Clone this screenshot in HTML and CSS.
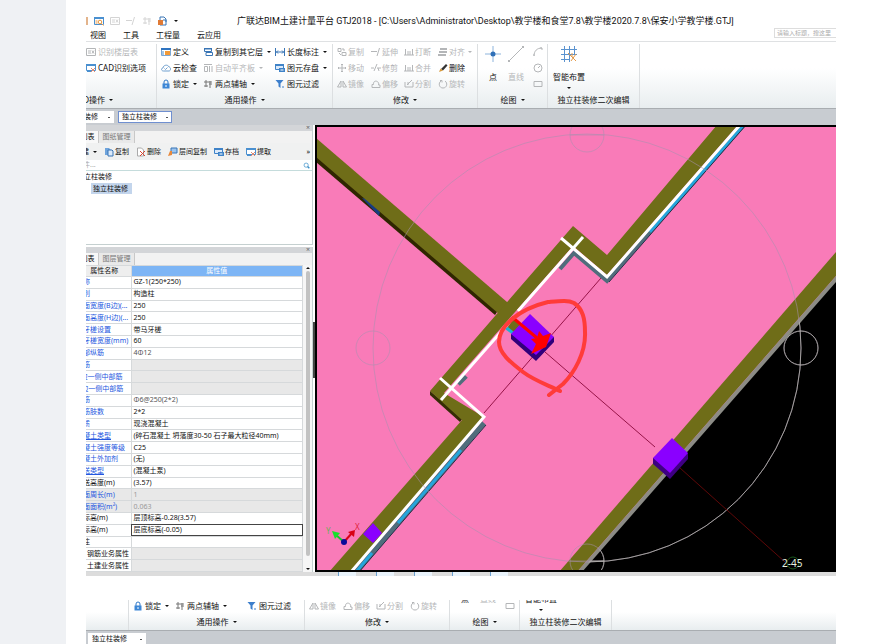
FILE: index.html
```html
<!DOCTYPE html>
<html lang="zh-CN">
<head>
    <meta charset="UTF-8">
    <meta name="viewport" content="width=device-width, initial-scale=1.0">
    <title>广联达BIM土建计量平台 GTJ2018</title>
    <link rel="stylesheet" href="styles.css">
</head>
<body>
    <!-- icon sprite -->
    <svg class="sprite" aria-hidden="true">
        <symbol id="i-find" viewBox="0 0 10 10"><path d="M.5 1.5h9v7h-9z" fill="#fff" stroke="#4a90d0"/><path d="M0 1h10v2H0z" fill="#4a90d0"/><circle cx="6" cy="6" r="1.8" fill="#fff" stroke="#e8943a"/><path d="M7.5 7.5L9.5 9.5M1.5 5h2M1.5 7h2" stroke="#e8943a"/></symbol>
        <symbol id="i-table" viewBox="0 0 10 10"><path d="M.5 1.5h9v7h-9zM2 4h3M2 6h3M6 3.5l2 3M8 3.5l-2 3" fill="none" stroke="currentColor"/></symbol>
        <symbol id="i-cad" viewBox="0 0 10 10"><path d="M.5 1.5h9v6h-9z" fill="#fff" stroke="#4a90d0"/><path d="M0 1h10v2H0zM1 7h4v2H1z" fill="#4a90d0"/><path d="M5 5l4 4M9 5L5 9" stroke="#e08a70"/></symbol>
        <symbol id="i-define" viewBox="0 0 10 10"><path d="M.5 1.5h9v7h-9z" fill="#fff" stroke="#7aa7d6"/><path d="M0 1h10v2H0z" fill="#2f74c0"/><path d="M4 4h5v4H4z" fill="#f29a38"/><path d="M1 5h2M1 7h2" stroke="#4a90d0"/></symbol>
        <symbol id="i-cloud" viewBox="0 0 10 10"><path d="M2.500 8C0 8 0 5 2 5c0-3 5-4 6-1 2 0 2 4 0 4z" fill="none" stroke="currentColor"/><path d="M3.500 5.500l1 1 2-2" fill="none" stroke="currentColor"/></symbol>
        <symbol id="i-lock" viewBox="0 0 10 10"><path d="M3 5V3a2 2 0 0 1 4 0v2" fill="none" stroke="#2f78c8"/><path d="M1.500 4.500h7V9.500h-7z" fill="#3d87d6"/><path d="M5 6v2" stroke="#fff"/></symbol>
        <symbol id="i-copyto" viewBox="0 0 10 10"><path d="M1.500 1.500h7v3h-7zM3 5.500h6.500v3H3z" fill="#fff" stroke="#3975b5"/><path d="M1 1h8v1.500H1z" fill="#3975b5"/></symbol>
        <symbol id="i-slab" viewBox="0 0 10 10"><path d="M1 1.500h8M1.500 3.500h3v5h-3zM6.500 3v6M9 3v6" fill="none" stroke="currentColor"/></symbol>
        <symbol id="i-axis" viewBox="0 0 10 10"><path d="M3 1v7M7 2v7M1 3h8M1 7h4M6 5h3" fill="none" stroke="currentColor"/></symbol>
        <symbol id="i-dim" viewBox="0 0 10 10"><path d="M.5 1v8M9.500 1v8M1 5h8M3 3.500L1.500 5 3 6.500M7 3.500L8.500 5 7 6.500" fill="none" stroke="#3975b5"/></symbol>
        <symbol id="i-save" viewBox="0 0 10 10"><path d="M.5 1.500h8v5h-8z" fill="#dceafa" stroke="#3f83c8"/><path d="M0 1h9v2H0zM4 5h6v4H4z" fill="#3f83c8"/><path d="M5.500 7h3" stroke="#fff"/></symbol>
        <symbol id="i-filter" viewBox="0 0 10 10"><path d="M.5 1h8L5.500 4.500V9l-2-1.500v-3z" fill="#3d7fcc"/><path d="M7 8h2" stroke="#3d7fcc"/></symbol>
        <symbol id="i-copy" viewBox="0 0 10 10"><path d="M1 1.500h3v3H1zM5 5.500h4v3H5zM5 2h2v2M2 6l2 2" fill="none" stroke="currentColor"/></symbol>
        <symbol id="i-extend" viewBox="0 0 10 10"><path d="M0 4.500h6M8.500 1L6 9" fill="none" stroke="currentColor"/></symbol>
        <symbol id="i-break" viewBox="0 0 10 10"><path d="M1.500 2v6M4 4v4M6 4v4M8.500 2v6M0 8h10" fill="none" stroke="currentColor"/></symbol>
        <symbol id="i-align" viewBox="0 0 10 10"><path d="M2 1h7v2H2zM1 4h8v2H1zM0 7h8v2H0z" fill="currentColor"/></symbol>
        <symbol id="i-move" viewBox="0 0 10 10"><path d="M5 1v8M1 5h8M4 2l1-1 1 1M4 8l1 1 1-1M2 4L1 5l1 1M8 4l1 1-1 1" fill="none" stroke="currentColor"/></symbol>
        <symbol id="i-trim" viewBox="0 0 10 10"><path d="M0 5h3M6 5h4M6 1L3 8M7 5l1 3" fill="none" stroke="currentColor"/></symbol>
        <symbol id="i-pen" viewBox="0 0 10 10"><path d="M3 6l5-5 1.500 1.500L5 7.500z" fill="#333"/><path d="M1 9l1.500-3.500L5 7.500z" fill="#d79a3c"/></symbol>
        <symbol id="i-mirror" viewBox="0 0 10 10"><path d="M4 2v6H.5zM6 2v6h3.500z" fill="none" stroke="currentColor"/></symbol>
        <symbol id="i-offset" viewBox="0 0 10 10"><path d="M1 8.500h8V6H7.500C9 2 2 0 2.500 5.500H1z" fill="none" stroke="currentColor"/></symbol>
        <symbol id="i-split" viewBox="0 0 10 10"><path d="M1 3v5h8V3M3 6L8 1M4 3v3" fill="none" stroke="currentColor"/></symbol>
        <symbol id="i-rotate" viewBox="0 0 10 10"><path d="M3 2C0 4 1 9 5 9s5-5 2-7M2 1.500h2v2" fill="none" stroke="currentColor"/></symbol>
        <symbol id="i-point" viewBox="0 0 18 18"><path d="M9 1v16M1 9h16" stroke="#8db4dc"/><circle cx="9" cy="9" r="2.500" fill="#2f70b8"/></symbol>
        <symbol id="i-line" viewBox="0 0 18 18"><path d="M2 16L16 2" stroke="currentColor"/><path d="M1 15h2v2H1zM15 1h2v2h-2z" fill="currentColor"/></symbol>
        <symbol id="i-arc" viewBox="0 0 10 10"><path d="M1 9C1 4 4 1 9 1M1 7v2M7 1h2v2" fill="none" stroke="currentColor"/></symbol>
        <symbol id="i-circle" viewBox="0 0 10 10"><circle cx="5" cy="5" r="4" fill="none" stroke="currentColor"/><path d="M5 5l2-2" stroke="currentColor"/></symbol>
        <symbol id="i-rect" viewBox="0 0 10 10"><path d="M1 2.500h8v5H1z" fill="none" stroke="currentColor"/></symbol>
        <symbol id="i-smart" viewBox="0 0 18 18"><path d="M1 4.500h16M1 9.500h16M1 14.500h9M4.500 1v16M9.500 1v16M14.500 1v9" stroke="#5b93cf"/><path d="M8 8l8 8M16 9l-5 7M12 8v4" stroke="#e39a4a"/></symbol>
        <symbol id="i-doc" viewBox="0 0 10 10"><path d="M1 1h4l2 2v5H1z" fill="#6fa4dc"/><path d="M4 3h4l1 1v5H4z" fill="#dceafa" stroke="#3975b5"/></symbol>
        <symbol id="i-del" viewBox="0 0 10 10"><path d="M1.500 1h4l2 2v6h-6z" fill="#fff" stroke="#aaa"/><path d="M4 4l5 5M9 4L4 9" stroke="#d8432e"/></symbol>
        <symbol id="i-layer" viewBox="0 0 10 10"><path d="M3 1h6v5H3z" fill="#9cc4ee" stroke="#3975b5"/><path d="M0 9l2-5h2v4z" fill="#e8883a"/></symbol>
        <symbol id="i-search" viewBox="0 0 10 10"><circle cx="4.500" cy="4.500" r="3" fill="none" stroke="#3a8fc8"/><path d="M6.500 6.500L9 9" stroke="#3a8fc8" stroke-width="2"/></symbol>
        <symbol id="i-export" viewBox="0 0 10 10"><path d="M2 1h4l2 2v6H2z" fill="#fff" stroke="#3975b5"/><path d="M0 4h5v5H0z" fill="#e07a35"/><path d="M5 4h3v2" stroke="#3975b5" fill="none"/></symbol>
    </svg>

    <main class="paper">
        <section class="shot">
            <header class="titlebar">
                <div class="quick">
                    <i class="edge"></i>
                    <svg class="ic"><use href="#i-find"/></svg>
                    <svg class="ic off"><use href="#i-table"/></svg>
                    <svg class="ic off"><use href="#i-extend"/></svg>
                    <svg class="ic off"><use href="#i-axis"/></svg>
                    <svg class="ic"><use href="#i-export"/></svg>
                    <i class="caret"></i>
                </div>
                <h1>广联达BIM土建计量平台 GTJ2018 - [C:\Users\Administrator\Desktop\教学楼和食堂7.8\教学楼2020.7.8\保安小学教学楼.GTJ]</h1>
            </header>
            <nav class="menu">
                <a href="#">视图</a>
                <a href="#">工具</a>
                <a href="#">工程量</a>
                <a href="#">云应用</a>
                <input type="text" placeholder="请输入标题，搜这里" aria-label="搜索">
            </nav>

            <div class="ribbon">
                <div class="group g-cad">
                    <div class="cells">
                        <button class="off"><svg class="ic"><use href="#i-table"/></svg>识别楼层表</button>
                        <button><svg class="ic"><use href="#i-cad"/></svg>CAD识别选项</button>
                    </div>
                    <button class="name">CAD操作<i class="caret"></i></button>
                </div>
                <div class="group g-common">
                    <div class="cells">
                        <button><svg class="ic"><use href="#i-define"/></svg>定义</button>
                        <button><svg class="ic"><use href="#i-copyto"/></svg>复制到其它层<i class="caret"></i></button>
                        <button><svg class="ic"><use href="#i-dim"/></svg>长度标注<i class="caret"></i></button>
                        <button><svg class="ic blue"><use href="#i-cloud"/></svg>云检查</button>
                        <button class="off"><svg class="ic"><use href="#i-slab"/></svg>自动平齐板<i class="caret"></i></button>
                        <button><svg class="ic"><use href="#i-save"/></svg>图元存盘<i class="caret"></i></button>
                        <button><svg class="ic"><use href="#i-lock"/></svg>锁定<i class="caret"></i></button>
                        <button><svg class="ic gray"><use href="#i-axis"/></svg>两点辅轴<i class="caret"></i></button>
                        <button><svg class="ic"><use href="#i-filter"/></svg>图元过滤</button>
                    </div>
                    <button class="name">通用操作<i class="caret"></i></button>
                </div>
                <div class="group g-edit">
                    <div class="cells">
                        <button class="off"><svg class="ic"><use href="#i-copy"/></svg>复制</button>
                        <button class="off"><svg class="ic"><use href="#i-extend"/></svg>延伸</button>
                        <button class="off"><svg class="ic"><use href="#i-break"/></svg>打断</button>
                        <button class="off"><svg class="ic"><use href="#i-align"/></svg>对齐<i class="caret"></i></button>
                        <button class="off"><svg class="ic"><use href="#i-move"/></svg>移动</button>
                        <button class="off"><svg class="ic"><use href="#i-trim"/></svg>修剪</button>
                        <button class="off"><svg class="ic"><use href="#i-break"/></svg>合并</button>
                        <button><svg class="ic"><use href="#i-pen"/></svg>删除</button>
                        <button class="off"><svg class="ic"><use href="#i-mirror"/></svg>镜像</button>
                        <button class="off"><svg class="ic"><use href="#i-offset"/></svg>偏移</button>
                        <button class="off"><svg class="ic"><use href="#i-split"/></svg>分割</button>
                        <button class="off"><svg class="ic"><use href="#i-rotate"/></svg>旋转</button>
                    </div>
                    <button class="name">修改<i class="caret"></i></button>
                </div>
                <div class="group g-draw">
                    <div class="cells">
                        <button class="big"><svg><use href="#i-point"/></svg>点</button>
                        <button class="big off"><svg><use href="#i-line"/></svg>直线</button>
                        <div class="shapes off">
                            <svg class="ic"><use href="#i-arc"/></svg>
                            <svg class="ic"><use href="#i-circle"/></svg>
                            <svg class="ic"><use href="#i-rect"/></svg>
                        </div>
                    </div>
                    <button class="name">绘图<i class="caret"></i></button>
                </div>
                <div class="group g-second">
                    <div class="cells">
                        <button class="big"><svg><use href="#i-smart"/></svg>智能布置<i class="caret"></i></button>
                    </div>
                    <div class="name">独立柱装修二次编辑</div>
                </div>
            </div>

            <div class="picker">
                <select class="cut" aria-label="构件类别"><option>装修</option></select>
                <select class="active" aria-label="构件类型"><option>独立柱装修</option></select>
            </div>

            <div class="work">
                <aside class="side">
                    <div class="panel list">
                        <div class="grip">×</div>
                        <div class="tabs"><button class="on">构件列表</button><button>图纸管理</button></div>
                        <div class="tools">
                            <button class="new">新建<i class="caret"></i></button>
                            <button><svg class="ic"><use href="#i-doc"/></svg>复制</button>
                            <button><svg class="ic"><use href="#i-del"/></svg>删除</button>
                            <button><svg class="ic"><use href="#i-layer"/></svg>层间复制</button>
                            <button><svg class="ic"><use href="#i-save"/></svg>存档</button>
                            <button><svg class="ic"><use href="#i-cad"/></svg>提取</button>
                            <span class="more">»</span>
                        </div>
                        <div class="find">
                            <input type="text" placeholder="搜索构件..." aria-label="搜索构件">
                            <svg class="ic"><use href="#i-search"/></svg>
                        </div>
                        <ul class="tree">
                            <li>独立柱装修</li>
                            <li><span class="sel">独立柱装修</span></li>
                        </ul>
                    </div>
                    <div class="panel props">
                        <div class="grip">×</div>
                        <div class="tabs"><button class="on">属性列表</button><button>图层管理</button></div>
                        <div class="sheet">
                            <table>
                                <thead><tr><th>属性名称</th><th>属性值</th></tr></thead>
                                <tbody>
                                    <tr><th>名称</th><td>GZ-1(250*250)</td></tr>
                                    <tr><th>类别</th><td>构造柱</td></tr>
                                    <tr><th>截面宽度(B边)(...</th><td>250</td></tr>
                                    <tr><th>截面高度(H边)(...</th><td>250</td></tr>
                                    <tr><th>马牙槎设置</th><td>带马牙槎</td></tr>
                                    <tr><th>马牙槎宽度(mm)</th><td>60</td></tr>
                                    <tr><th>全部纵筋</th><td class="soft">4Φ12</td></tr>
                                    <tr><th>角筋</th><td class="dim"></td></tr>
                                    <tr><th>B边一侧中部筋</th><td class="dim"></td></tr>
                                    <tr><th>H边一侧中部筋</th><td class="dim"></td></tr>
                                    <tr><th>箍筋</th><td class="soft">Φ6@250(2*2)</td></tr>
                                    <tr><th>箍筋肢数</th><td>2*2</td></tr>
                                    <tr><th>材质</th><td>现浇混凝土</td></tr>
                                    <tr><th><u>混凝土类型</u></th><td>(碎石混凝土 坍落度30-50 石子最大粒径40mm)</td></tr>
                                    <tr><th>混凝土强度等级</th><td>C25</td></tr>
                                    <tr><th>混凝土外加剂</th><td>(无)</td></tr>
                                    <tr><th><u>泵送类型</u></th><td>(混凝土泵)</td></tr>
                                    <tr class="plain"><th>泵送高度(m)</th><td>(3.57)</td></tr>
                                    <tr><th class="dim">截面周长(m)</th><td class="dim">1</td></tr>
                                    <tr><th class="dim">截面面积(m²)</th><td class="dim">0.063</td></tr>
                                    <tr class="plain"><th>顶标高(m)</th><td>层顶标高-0.28(3.57)</td></tr>
                                    <tr class="plain"><th>底标高(m)</th><td class="edit">层底标高(-0.05)</td></tr>
                                    <tr class="plain"><th>备注</th><td></td></tr>
                                    <tr class="plain sub"><th>钢筋业务属性</th><td class="dim"></td></tr>
                                    <tr class="plain sub"><th>土建业务属性</th><td class="dim"></td></tr>
                                </tbody>
                            </table>
                            <div class="scroll"><i class="up"></i><i class="thumb"></i><i class="caret"></i></div>
                        </div>
                    </div>
                    <i class="handle"></i>
                </aside>

                <svg class="model" viewBox="315 125 521 447" role="img" aria-label="三维模型视图">
                    <defs>
                        <clipPath id="outside"><path d="M836 280L580 572H836z"/></clipPath>
                        <g id="orbit" fill="none">
                            <circle cx="587" cy="348" r="214"/>
                            <circle cx="587" cy="135" r="17"/>
                            <circle cx="373" cy="348" r="17"/>
                            <circle cx="801" cy="348" r="17"/>
                            <circle cx="587" cy="561" r="17"/>
                            <path d="M570 135h34M570 561h34"/>
                        </g>
                    </defs>
                    <path d="M315 125h521v447H315z" fill="#f97bb8"/>
                    <path d="M836 280L580 572H836z" fill="#000"/>

                    <!-- outer wall -->
                    <path d="M836 252L559 572H577L836 276z" fill="#6f6d18"/>
                    <path d="M836 276L577 572H582L836 282z" fill="#8c8c86"/>

                    <!-- diagonal wall -->
                    <path d="M316 155L499 309L495 315L316 162z" fill="#2f2600"/>
                    <path d="M362 198l5 1 13 13-1 4z" fill="#173c82"/>
                    <path d="M316 138L507 302L512 310L499 314L316 157z" fill="#6f6d18"/>

                    <!-- inner wall -->
                    <path d="M430 391v4l11 10 19 17 3-4z" fill="#352d05"/>
                    <path d="M560 269L574 253L607 281L744 125" fill="none" stroke="#506d7c" stroke-width="4"/>
                    <path d="M458 384L466 376M484 423L356 572" fill="none" stroke="#506d7c" stroke-width="5"/>
                    <path d="M650 232L744 125M461 450L398 523M372 553L356 572" fill="none" stroke="#25a5dc" stroke-width="3"/>
                    <path d="M486 425L359 572M609 282L746 125" fill="none" stroke="#26304a"/>
                    <path d="M573 226L607 255L717 125H738L607 275L573 246L444 393L484 417L352 572H329L462 420L430 391z" fill="#6f6d18"/>
                    <path d="M561 238L607 277L740 125M583 237L518 311M507 325L441 400M440 378L484 417L351 572" fill="none" stroke="#fff" stroke-width="3"/>

                    <use href="#orbit" stroke="#a88fae" stroke-opacity=".55"/>
                    <use href="#orbit" stroke="#b4b4ae" stroke-opacity=".8" clip-path="url(#outside)"/>

                    <!-- axis lines -->
                    <path d="M601 278L484 413M545 352L655 447" stroke="#971448"/>
                    <path d="M680 468L785 562" stroke="#5e0808"/>

                    <!-- columns -->
                    <path d="M505 329l8 6 4-5-7-5z" fill="#1bb3cf"/>
                    <path d="M514 318l7 6-7 8-6-5z" fill="#6f6d18"/>
                    <path d="M511 334v5L536 361L554 342V337z" fill="#31007a"/>
                    <path d="M530 314L554 337L536 355L511 334z" fill="#8a00ff"/>
                    <path d="M653 458v6L670 479L688 459V453z" fill="#3e0082"/>
                    <path d="M672 438L688 453L670 473L653 458z" fill="#8a00ff"/>
                    <path d="M373 523L382 533L373 543L363 534z" fill="#8a00ff"/>

                    <path d="M512 317L537 338" stroke="#f00" stroke-width="3"/>
                    <path d="M539 331l4 5 8-3-5 14-15 7 5-10-5-5 6-1z" fill="#f00"/>
                    <path d="M560 391C548 385 535 381 523 372C510 362 499 353 499 342C499 326 519 309 548 302C560 301 568 300 574 303C583 309 585 319 585 332C586 353 574 373 563 384L549 395" fill="none" stroke="#ff3b39" stroke-width="4" stroke-linecap="round" stroke-linejoin="round"/>

                    <!-- coordinate axes -->
                    <path d="M344 542L352 533" stroke="#d80016" stroke-width="2"/>
                    <path d="M355 530l-1 7-6-5z" fill="#d80016"/>
                    <path d="M344 542L336 535" stroke="#18c82c" stroke-width="2"/>
                    <path d="M332 531l8 2-5 6z" fill="#18e02c"/>
                    <circle cx="344" cy="542" r="3" fill="#0a0a9a"/>
                    <text x="355" y="530" class="ax-x">X</text>
                    <text x="326" y="534" class="ax-y">Y</text>
                    <circle cx="793" cy="563" r="6" fill="none" stroke="#17551c"/>
                    <text x="782" y="567" class="grid-no">2-45</text>
                    <path d="M836 126H316v445h520" fill="none" stroke="#000" stroke-width="2"/>
                </svg>
            </div>
            <footer class="status"><i></i><i></i><i></i><i></i><i></i></footer>
        </section>

        <section class="shot lower">
            <div class="ribbon">
                <div class="group g-cad"></div>
                <div class="group g-common">
                    <div class="cells">
                        <button><svg class="ic"><use href="#i-lock"/></svg>锁定<i class="caret"></i></button>
                        <button><svg class="ic gray"><use href="#i-axis"/></svg>两点辅轴<i class="caret"></i></button>
                        <button><svg class="ic"><use href="#i-filter"/></svg>图元过滤</button>
                    </div>
                    <button class="name">通用操作<i class="caret"></i></button>
                </div>
                <div class="group g-edit">
                    <div class="cells">
                        <button class="off"><svg class="ic"><use href="#i-mirror"/></svg>镜像</button>
                        <button class="off"><svg class="ic"><use href="#i-offset"/></svg>偏移</button>
                        <button class="off"><svg class="ic"><use href="#i-split"/></svg>分割</button>
                        <button class="off"><svg class="ic"><use href="#i-rotate"/></svg>旋转</button>
                    </div>
                    <button class="name">修改<i class="caret"></i></button>
                </div>
                <div class="group g-draw">
                    <div class="cells">
                        <button class="big">点</button>
                        <button class="big off">直线</button>
                        <div class="shapes off"><svg class="ic"><use href="#i-rect"/></svg></div>
                    </div>
                    <button class="name">绘图<i class="caret"></i></button>
                </div>
                <div class="group g-second">
                    <div class="cells">
                        <button class="big">智能布置<i class="caret"></i></button>
                    </div>
                    <div class="name">独立柱装修二次编辑</div>
                </div>
            </div>
            <div class="picker">
                <select aria-label="构件类型"><option>独立柱装修</option></select>
            </div>
        </section>
    </main>
</body>
</html>
```
FILE: styles.css
```css
* {
    margin: 0;
    padding: 0;
    box-sizing: border-box;
}

body {
    background: #eff1f4;
    font-family: "Noto Sans", "Noto Sans CJK SC", sans-serif;
    font-size: 8px;
    line-height: 12px;
    color: #111;
}

button,
input,
select {
    font: inherit;
    color: inherit;
    background: none;
    border: 0;
    outline: 0;
}

button,
a {
    white-space: nowrap;
    color: inherit;
    text-decoration: none;
}

.sprite {
    display: none;
}

.paper {
    margin-left: 66px;
    padding: 14px 57px 0 20px;
    min-height: 100vh;
    background: #fff;
}

.shot {
    overflow: hidden;
}

.ic {
    width: 10px;
    height: 10px;
    flex: none;
}

.off {
    color: #b4b6b8;
}

.blue {
    color: #6f9fce;
}

.gray {
    color: #777;
}

.quick .off {
    color: #d4d4d4;
}

.caret {
    flex: none;
    border: 2px solid transparent;
    border-top-color: currentColor;
    border-bottom: 0;
}

/* title and menu */
.titlebar {
    display: flex;
    align-items: center;
    height: 14px;
}

.quick {
    display: flex;
    align-items: center;
    gap: 6px;
    width: 151px;
}

.quick .edge {
    width: 2px;
    height: 8px;
    background: #e3b48c;
}

h1 {
    font-family: Roboto, "Noto Sans CJK SC", sans-serif;
    font-size: 9px;
    font-weight: 400;
    white-space: nowrap;
}

.menu {
    display: flex;
    align-items: center;
    gap: 17px;
    height: 14px;
    padding-left: 4px;
    border-bottom: 1px solid #dfe1e3;
}

.menu input {
    width: 62px;
    height: 10px;
    margin: 0 0 3px auto;
    padding-left: 2px;
    border: 1px solid #ddd;
    border-right: 0;
    font-size: 6px;
}

::placeholder {
    color: #aaa;
    opacity: 1;
}

/* ribbon */
.ribbon {
    display: flex;
    align-items: flex-end;
    padding-top: 2px;
    background: linear-gradient(#fff 40%, #e8edef);
    border-bottom: 1px solid #a9adb1;
}

.group {
    display: flex;
    flex-direction: column;
    flex: none;
    height: 64px;
    border-right: 1px solid #dcdfe1;
}

.cells {
    display: grid;
    grid-auto-rows: 16px;
    height: 48px;
    padding-left: 4px;
}

.cells button {
    display: flex;
    align-items: center;
    gap: 2px;
}

.cells .caret {
    margin-left: 2px;
}

.name {
    display: flex;
    align-items: center;
    justify-content: center;
    gap: 4px;
    height: 16px;
    white-space: nowrap;
}

.g-cad {
    width: 71px;
}

.g-cad .cells {
    padding-left: 0;
}

.g-cad .name {
    align-self: flex-start;
    margin-left: -13px;
}

.g-common {
    width: 176px;
}

.g-common .cells {
    grid-template-columns: 42px 72px 1fr;
}

.g-edit {
    width: 145px;
}

.g-edit .cells {
    grid-template-columns: 34px 33px 34px 1fr;
}

.g-edit .cells button {
    gap: 1px;
}

.g-draw {
    width: 70px;
}

.g-draw .cells {
    grid-template-columns: 22px 24px 1fr;
}

.g-second {
    width: 92px;
}

.cells .big {
    flex-direction: column;
    height: 48px;
    gap: 4px;
}

.big svg {
    width: 18px;
    height: 18px;
    margin: 1px 0 4px;
}

.big .caret {
    margin: 0;
}

.g-second .big {
    width: 34px;
}

.shapes {
    display: grid;
    grid-auto-rows: 16px;
    align-items: center;
    justify-content: center;
}

/* combo bar */
.picker {
    display: flex;
    gap: 4px;
    padding: 2px 0;
    background: #c8ccd1;
}

.picker select {
    appearance: none;
    width: 54px;
    height: 12px;
    padding-left: 3px;
    border: 1px solid #fff;
    font-size: 7px;
    line-height: 10px;
    background: #fff linear-gradient(#555, #555) no-repeat right 3px center / 2px 1px;
}

.picker .cut {
    width: 34px;
    margin-left: -6px;
}

.picker .active {
    border-color: #6f8fd0;
}

/* side panels */
.work {
    display: flex;
    background: #fff;
}

.side {
    position: relative;
    display: flex;
    flex-direction: column;
    gap: 2px;
    width: 229px;
    flex: none;
    padding-right: 2px;
    font-size: 7px;
}

.panel {
    border-right: 1px solid #c5d0d0;
}

.list {
    height: 120px;
    border-bottom: 1px solid #c5d0d0;
}

.props {
    display: flex;
    flex-direction: column;
    flex: 1;
}

.grip {
    height: 6px;
    padding-right: 2px;
    background: #d3d5d8;
    color: #666;
    text-align: right;
    line-height: 6px;
}

.tabs {
    display: flex;
    height: 12px;
    margin-left: -23px;
    background: #f2f2f2;
}

.tabs button {
    width: 36px;
    border-right: 1px solid #c8c8c8;
    background: #e9e9e9;
    color: #777;
}

.tabs .on {
    background: #f8f8f8;
    color: #111;
}

.tools {
    display: flex;
    align-items: center;
    gap: 7px;
    height: 17px;
    background: #f0f1f1;
}

.tools button {
    display: flex;
    align-items: center;
    gap: 1px;
}

.tools .new {
    gap: 4px;
    margin-left: -11px;
}

.more {
    margin: 0 2px 0 auto;
}

.find {
    display: flex;
    align-items: center;
    height: 11px;
    padding-right: 2px;
    border-bottom: 1px solid #c5dcdc;
}

.find input {
    flex: 1;
    min-width: 0;
    height: 10px;
    margin-left: -24px;
}

.find .ic {
    width: 7px;
    height: 7px;
}

.tree {
    list-style: none;
    margin-left: -9px;
}

.tree .sel {
    display: inline-block;
    margin-left: 14px;
    padding: 0 4px 0 2px;
    line-height: 11px;
    background: #c3d5ec;
}

.sheet {
    display: flex;
    flex: 1;
}

table {
    flex: 1;
    height: 100%;
    margin-left: -14px;
    border-collapse: collapse;
    table-layout: fixed;
    line-height: 10px;
}

tr > * {
    border: 1px solid #d6d9db;
    border-left: 0;
    white-space: nowrap;
    overflow: hidden;
}

tbody th {
    padding-left: 4px;
    font-weight: 400;
    text-align: left;
    color: #2457e0;
}

thead th {
    font-weight: 400;
    background: #eee;
}

thead th:first-child {
    width: 59px;
    padding-left: 6px;
}

thead th:last-child {
    background: #7db5f5;
    color: #fff;
}

td {
    padding-left: 2px;
}

.plain th {
    color: #111;
}

.sub th {
    padding-left: 15px;
}

.soft {
    color: #555;
}

.dim {
    background: #e8e8e8;
}

td.dim {
    color: #999;
}

.edit {
    outline: 1px solid #444;
    outline-offset: -1px;
}

.scroll {
    display: flex;
    flex-direction: column;
    align-items: center;
    justify-content: space-between;
    gap: 2px;
    width: 9px;
    padding: 2px 0;
    background: #f6f6f6;
}

.up {
    border: 2px solid transparent;
    border-bottom-color: #111;
    border-top: 0;
}

.thumb {
    flex: 1;
    width: 4px;
    margin-bottom: 10px;
    border-radius: 2px;
    background: #c2c2c2;
}

.handle {
    position: absolute;
    right: 0;
    top: 44%;
    width: 2px;
    height: 56px;
    background: #454545;
}

.model {
    display: block;
    flex: 1;
    min-width: 0;
    font-size: 10px;
}

.ax-x {
    fill: #e0243c;
    font-size: 8px;
}

.ax-y {
    fill: #6fae5c;
    font-size: 8px;
}

.grid-no {
    fill: #e6f2e0;
}

.status {
    display: flex;
    gap: 20px;
    height: 4px;
    padding-left: 252px;
    background: #dcdcdc;
}

.status i {
    width: 18px;
    border-left: 1px solid #6aa0d0;
    background: #e9f3fb;
}

/* second capture, scrolled down so only the bottom of the ribbon shows */
.lower {
    margin-top: 24px;
}

.lower .ribbon {
    height: 31px;
    margin-left: -28px;
    padding-top: 0;
    overflow: hidden;
}

.lower .group {
    justify-content: flex-end;
}

.lower .cells {
    height: 16px;
    align-items: end;
}

.lower .cells button {
    height: 16px;
}

.lower .cells .big {
    height: 21px;
}

.lower .picker {
    padding: 2px 2px 0;
}

.lower .picker select {
    width: 58px;
}
```
